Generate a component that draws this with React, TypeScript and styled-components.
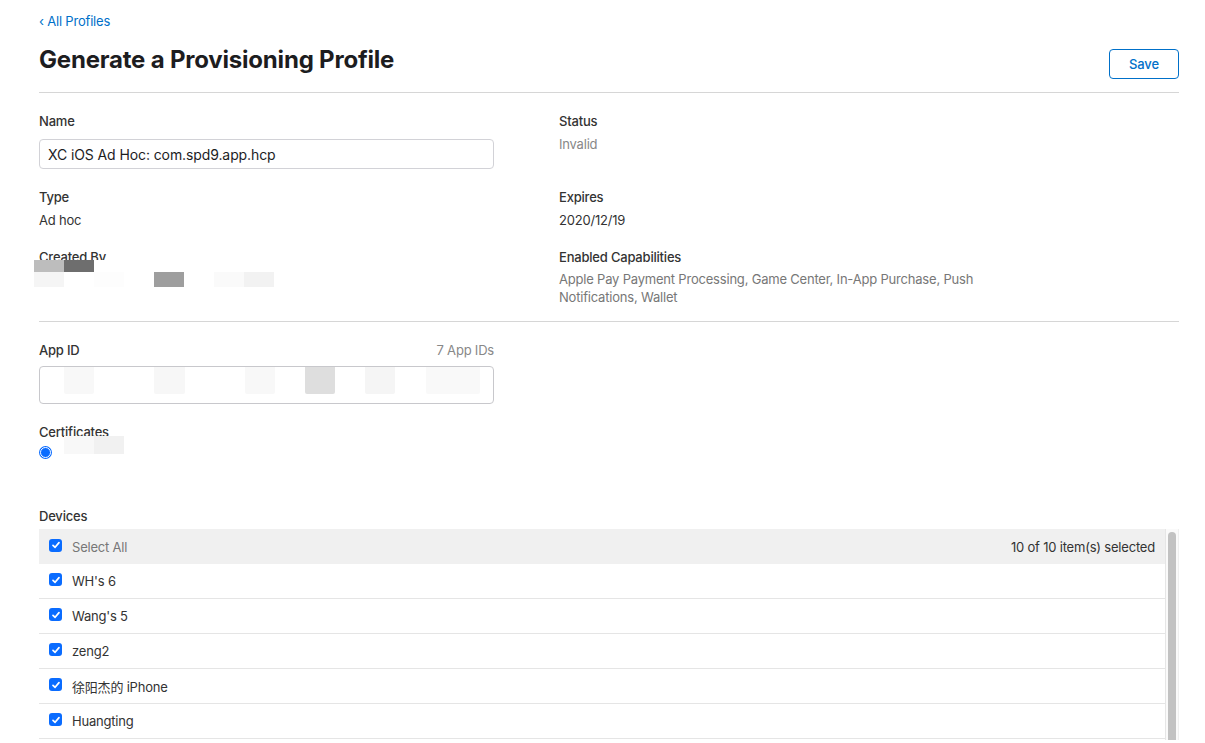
import React from "react";
import styled, { createGlobalStyle } from "styled-components";

const Global = createGlobalStyle`
  html, body { margin: 0; padding: 0; overflow: hidden; background: #fff; }
  body { font-family: Inter, "Noto Sans", "Noto Sans CJK SC", sans-serif; color: #333; -webkit-font-smoothing: antialiased; letter-spacing: -0.2px; }
  * { box-sizing: border-box; }
`;

const Page = styled.div`
  width: 1140px;
  margin-left: 39px;
  padding-top: 12px;
`;

const BackLink = styled.a`
  display: block;
  font-size: 13px;
  line-height: 18px;
  height: 18px;
  color: #0070c9;
  text-decoration: none;
`;

const TitleRow = styled.div`
  display: flex;
  justify-content: space-between;
  align-items: flex-start;
  padding: 15px 0 13px;
  border-bottom: 1px solid #d6d6d6;
`;

const Title = styled.h1`
  margin: 0;
  font-size: 24px;
  line-height: 30px;
  font-weight: 700;
  color: #1d1d1f;
  letter-spacing: -0.2px;
`;

const SaveButton = styled.button`
  margin-top: 4px;
  width: 70px;
  height: 30px;
  border: 1px solid #0070c9;
  border-radius: 4px;
  background: #fff;
  color: #0070c9;
  font-family: inherit;
  font-size: 13px;
  font-weight: 500;
  letter-spacing: -0.1px;
  cursor: pointer;
`;

const DetailsGrid = styled.div`
  display: grid;
  grid-template-columns: 520px 1fr;
  row-gap: 19px;
  padding: 19px 0 15px;
  border-bottom: 1px solid #d6d6d6;
`;

const Field = styled.div`
  display: flex;
  flex-direction: column;
`;

const Label = styled.div`
  font-size: 13px;
  line-height: 18px;
  font-weight: 500;
  color: #333;
`;

const Value = styled.div<{ $muted?: boolean }>`
  margin-top: 5px;
  font-size: 13px;
  line-height: 18px;
  color: ${(p) => (p.$muted ? "#888" : "#333")};
`;

const Capabilities = styled.div`
  margin-top: 4px;
  max-width: 430px;
  font-size: 13px;
  line-height: 18px;
  color: #777;
`;

const TextInput = styled.input`
  margin-top: 9px;
  width: 455px;
  height: 30px;
  border: 1px solid #d2d2d7;
  border-radius: 4px;
  padding: 0 8px;
  font-family: inherit;
  font-size: 14px;
  letter-spacing: -0.1px;
  color: #1d1d1f;
  outline: none;
`;

const Mosaic = styled.div<{ $cols: number; $rows: string; $ml: number; $mt: number }>`
  display: grid;
  grid-template-columns: repeat(${(p) => p.$cols}, 30px);
  grid-template-rows: ${(p) => p.$rows};
  margin-left: ${(p) => p.$ml}px;
  margin-top: ${(p) => p.$mt}px;
`;

const Cell = styled.div<{ $c: string }>`
  background: ${(p) => p.$c};
`;

const Section = styled.div<{ $pt: number }>`
  padding-top: ${(p) => p.$pt}px;
`;

const LabelRow = styled.div`
  width: 455px;
  display: flex;
  justify-content: space-between;
  align-items: baseline;
`;

const Count = styled.span`
  font-size: 13px;
  line-height: 18px;
  color: #888;
`;

const SelectBox = styled.div`
  margin-top: 7px;
  width: 455px;
  height: 38px;
  border: 1px solid #c8c8cc;
  border-radius: 4px;
  display: flex;
  align-items: flex-start;
  overflow: hidden;
`;

const Patch = styled.div<{ $w: number; $ml: number; $c: string }>`
  width: ${(p) => p.$w}px;
  height: 27px;
  margin-left: ${(p) => p.$ml}px;
  background: ${(p) => p.$c};
  border-radius: 0 0 2px 2px;
`;

const RadioRow = styled.div`
  display: flex;
  align-items: flex-start;
  height: 22px;
`;

const Radio = styled.span`
  margin-top: 5px;
  width: 13px;
  height: 13px;
  border-radius: 50%;
  background: #0a6cff;
  display: flex;
  align-items: center;
  justify-content: center;
  flex: none;
  &::after {
    content: "";
    width: 9px;
    height: 9px;
    border-radius: 50%;
    border: 1.5px solid #fff;
    background: #0a6cff;
  }
`;

const ListArea = styled.div`
  margin-top: 4px;
  height: 211px;
  display: flex;
  overflow: hidden;
`;

const Rows = styled.div`
  flex: 1;
  min-width: 0;
`;

const ScrollTrack = styled.div`
  width: 14px;
  flex: none;
  background: #fafafa;
  border-left: 1px solid #e6e6e6;
  border-right: 1px solid #efefef;
  padding: 3px 2px 0 2px;
`;

const ScrollThumb = styled.div`
  height: 300px;
  border-radius: 5px;
  background: #c2c2c2;
`;

const Row = styled.div<{ $head?: boolean }>`
  display: flex;
  align-items: center;
  height: 35px;
  padding: 0 10px;
  background: ${(p) => (p.$head ? "#f0f0f0" : "#fff")};
  border-bottom: ${(p) => (p.$head ? "none" : "1px solid #e5e5e5")};
  font-size: 13px;
  color: ${(p) => (p.$head ? "#777" : "#333")};
`;

const RowText = styled.span`
  margin-left: 10px;
  flex: 1;
`;

const Selected = styled.span`
  color: #333;
`;

const Box = styled.span`
  width: 13px;
  height: 13px;
  border-radius: 3px;
  background: #0a6cff;
  display: flex;
  align-items: center;
  justify-content: center;
  flex: none;
  margin-top: -3px;
`;

const Check = () => (
  <Box>
    <svg width="10" height="10" viewBox="0 0 10 10">
      <path d="M2 5.3 L4.1 7.3 L8 2.6" fill="none" stroke="#fff" strokeWidth="1.7" strokeLinecap="round" strokeLinejoin="round" />
    </svg>
  </Box>
);

const devices = ["WH's 6", "Wang's 5", "zeng2", "徐阳杰的 iPhone", "Huangting"];

const createdCells = [
  "#bdbdbd", "#6e6e6e", "#fff", "#fff", "#fff", "#fff", "#fff", "#fff",
  "#f5f5f5", "#fff", "#fdfdfd", "#fff", "#9e9e9e", "#fff", "#fafafa", "#f2f2f2",
];

const appPatches = [
  { w: 30, ml: 24, c: "#f8f8f8" },
  { w: 31, ml: 60, c: "#f7f7f7" },
  { w: 30, ml: 60, c: "#f8f8f8" },
  { w: 30, ml: 30, c: "#dedede" },
  { w: 30, ml: 30, c: "#f5f5f5" },
  { w: 54, ml: 31, c: "#f9f9f9" },
];

export default function App() {
  return (
    <>
      <Global />
      <Page>
        <BackLink href="#">‹ All Profiles</BackLink>
        <TitleRow>
          <Title>Generate a Provisioning Profile</Title>
          <SaveButton>Save</SaveButton>
        </TitleRow>

        <DetailsGrid>
          <Field>
            <Label>Name</Label>
            <TextInput defaultValue="XC iOS Ad Hoc: com.spd9.app.hcp" />
          </Field>
          <Field>
            <Label>Status</Label>
            <Value $muted>Invalid</Value>
          </Field>
          <Field>
            <Label>Type</Label>
            <Value>Ad hoc</Value>
          </Field>
          <Field>
            <Label>Expires</Label>
            <Value>2020/12/19</Value>
          </Field>
          <Field>
            <Label>Created By</Label>
            <Mosaic $cols={8} $rows="12px 15px" $ml={-5} $mt={-6}>
              {createdCells.map((c, i) => (
                <Cell key={i} $c={c} />
              ))}
            </Mosaic>
          </Field>
          <Field>
            <Label>Enabled Capabilities</Label>
            <Capabilities>
              Apple Pay Payment Processing, Game Center, In-App Purchase, Push Notifications, Wallet
            </Capabilities>
          </Field>
        </DetailsGrid>

        <Section $pt={19}>
          <LabelRow>
            <Label>App ID</Label>
            <Count>7 App IDs</Count>
          </LabelRow>
          <SelectBox>
            {appPatches.map((p, i) => (
              <Patch key={i} $w={p.w} $ml={p.ml} $c={p.c} />
            ))}
          </SelectBox>
        </Section>

        <Section $pt={19}>
          <Label>Certificates</Label>
          <RadioRow>
            <Radio />
            <Mosaic $cols={2} $rows="18px" $ml={12} $mt={-5}>
              <Cell $c="#f8f8f8" />
              <Cell $c="#f1f1f1" />
            </Mosaic>
          </RadioRow>
        </Section>

        <Section $pt={44}>
          <Label>Devices</Label>
          <ListArea>
            <Rows>
              <Row $head>
                <Check />
                <RowText>Select All</RowText>
                <Selected>10 of 10 item(s) selected</Selected>
              </Row>
              {devices.map((d) => (
                <Row key={d}>
                  <Check />
                  <RowText>{d}</RowText>
                </Row>
              ))}
            </Rows>
            <ScrollTrack>
              <ScrollThumb />
            </ScrollTrack>
          </ListArea>
        </Section>
      </Page>
    </>
  );
}
